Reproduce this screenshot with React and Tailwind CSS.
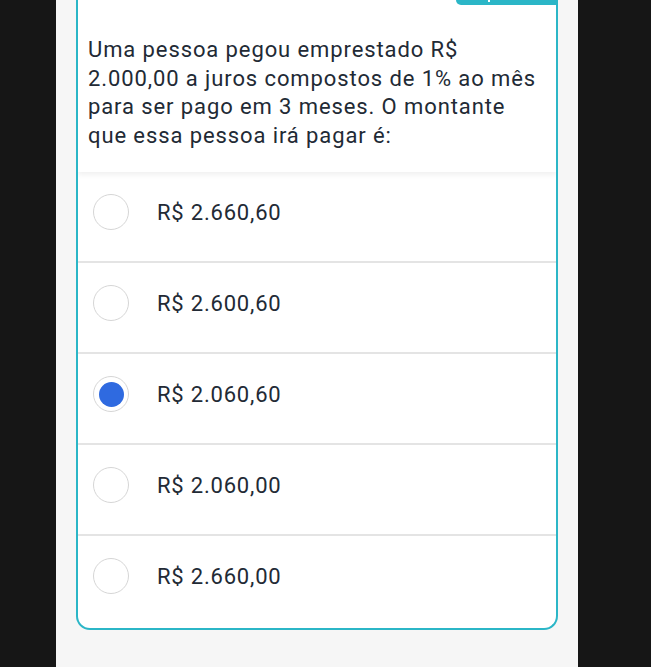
import React from 'react';

const options = [
  { label: 'R$ 2.660,60', selected: false },
  { label: 'R$ 2.600,60', selected: false },
  { label: 'R$ 2.060,60', selected: true },
  { label: 'R$ 2.060,00', selected: false },
  { label: 'R$ 2.660,00', selected: false },
];

function Radio({ selected }) {
  return (
    <div className="w-[36px] h-[36px] rounded-full border-[1.5px] border-[#d6d6d6] bg-white flex items-center justify-center shrink-0">
      {selected && <div className="w-[25px] h-[25px] rounded-full bg-[#2f6ae0]" />}
    </div>
  );
}

export default function App() {
  return (
    <div className="w-[651px] h-[667px] bg-[#161616] flex overflow-hidden" style={{ fontFamily: 'Roboto, "Noto Sans", sans-serif' }}>
      <div className="ml-[56px] w-[522px] h-full bg-[#f6f6f6] px-[20px]">
        <div className="bg-white border-2 border-t-0 border-[#2bb6c7] rounded-b-[14px] overflow-hidden">
          {/* enunciado */}
          <div className="relative z-10 bg-white shadow-[0_3px_5px_rgba(0,0,0,0.06)]">
            <div className="flex justify-end">
              <div className="h-[5px] w-[100px] bg-[#2bb6c7] rounded-bl-[10px] relative">
                <div className="absolute left-[32px] top-0 w-[2px] h-[2px] bg-white" />
              </div>
            </div>
            <p className="pl-[10px] pr-[10px] pt-[31px] pb-[22px] text-[22px] leading-[28.5px] tracking-[0.9px] text-[#222a35]">
              Uma pessoa pegou emprestado R$ 2.000,00 a juros compostos de 1% ao mês para ser pago em 3 meses. O montante que essa pessoa irá pagar é:
            </p>
          </div>

          {/* alternativas */}
          <div>
            {options.map((opt, i) => (
              <div
                key={i}
                className={`flex items-center pl-[15px] gap-[28px] ${i < options.length - 1 ? 'h-[91px] pb-[9px] border-b-2 border-[#e4e4e4]' : 'h-[92px] pb-[12px]'}`}
              >
                <Radio selected={opt.selected} />
                <span className="text-[22px] tracking-[0.8px] text-[#222a35]">{opt.label}</span>
              </div>
            ))}
          </div>
        </div>
      </div>
    </div>
  );
}
